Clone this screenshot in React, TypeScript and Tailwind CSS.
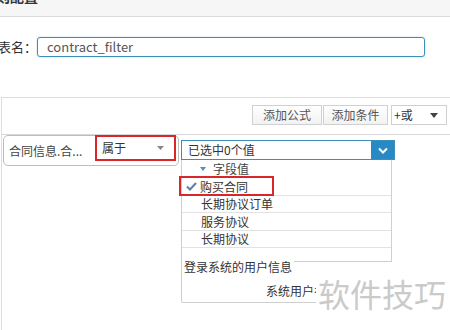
export default function App() {
  const font = { fontFamily: '"Noto Sans CJK SC", "Noto Sans", sans-serif' };
  return (
    <div className="w-[450px] h-[330px] overflow-hidden bg-white relative text-[#333]" style={font}>
      <div className="h-[17px] bg-[#f6f6f6] border-b border-[#dcdcdc] overflow-hidden">
        <div className="-mt-[14px] -ml-[18px] text-[14px] font-bold leading-[20px] whitespace-nowrap">规则配置</div>
      </div>

      <div className="flex items-center pt-[20px]">
        <div className="w-[39px] -ml-[2px] text-[13px] leading-[20px] shrink-0 whitespace-nowrap">表名：</div>
        <div className="w-[388px] h-[20px] border border-[#3c8fb9] rounded-[3px] flex items-center pl-[9px] text-[13px] text-[#555] shadow-[0_0_2px_rgba(60,143,185,0.4)]">
          contract_filter
        </div>
      </div>

      <div className="mt-[40px] ml-[1px] border-t border-l border-[#dedede] h-[240px]">
        <div className="flex justify-end items-center pt-[7px] pr-[3px] pb-[9px] border-b border-[#d8d8d8] text-[12px]">
          <div className="w-[70px] h-[20px] border border-[#d0d0d0] bg-gradient-to-b from-white to-[#f2f2f2] flex items-center justify-center text-[#555]">添加公式</div>
          <div className="w-[65px] h-[20px] ml-[1px] border border-[#d0d0d0] bg-gradient-to-b from-white to-[#f2f2f2] flex items-center justify-center text-[#555]">添加条件</div>
          <div className="w-[56px] h-[20px] ml-[3px] border border-[#d0d0d0] bg-white flex items-center pl-[2px] text-[#333]">
            <span>+或</span>
            <svg className="ml-auto mr-[8px]" width="8" height="5" viewBox="0 0 8 5"><path d="M0 0h8L4 5z" fill="#444" /></svg>
          </div>
        </div>

        <div className="flex items-start ml-[1px] text-[12px]">
          <div className="w-[176px] h-[31px] border border-[#bdbdbd] rounded-[5px] flex items-start shrink-0">
            <div className="w-[91px] pl-[5px] h-[29px] flex items-center text-[#444] whitespace-nowrap">合同信息.合...</div>
            <div className="w-[81px] h-[26px] -mt-[1px] border-2 border-[#d8262d] flex items-center pl-[5px] bg-white">
              <span>属于</span>
              <svg className="ml-auto mr-[10px]" width="7" height="4" viewBox="0 0 7 4"><path d="M0 0h7L3.5 4z" fill="#888" /></svg>
            </div>
          </div>

          <div className="ml-[2px] w-[214px] mt-[5px] shrink-0">
            <div className="h-[20px] border border-[#3c8fb9] flex items-stretch">
              <div className="flex-1 flex items-center pl-[6px] text-[#333]">已选中0个值</div>
              <div className="w-[23px] bg-[#2989c4] flex items-center justify-center">
                <svg width="10" height="7" viewBox="0 0 10 7"><path d="M1 1.5l4 4 4-4" stroke="white" strokeWidth="2" fill="none" /></svg>
              </div>
            </div>

            <div className="w-[211px] border-l border-b border-[#cfcfcf] rounded-bl-[2px]">
              <div className="border-r border-b border-[#cfcfcf] h-[102px]">
                <div className="h-[18px] flex items-center pl-[18px] text-[#444]">
                  <svg width="6" height="4" viewBox="0 0 6 4"><path d="M0 0h6L3 4z" fill="#4a90c8" /></svg>
                  <span className="ml-[7px]">字段值</span>
                </div>
                <div className="relative h-[18px] flex items-center pl-[4px] border-b border-[#e2e2e2]">
                  <span className="absolute -left-[3px] -top-[2px] w-[95px] h-[20px] border-2 border-[#d8262d]" />
                  <svg width="11" height="9" viewBox="0 0 11 9"><path d="M1 4.5l3 3 6-6.5" stroke="#5b7fa6" strokeWidth="2" fill="none" /></svg>
                  <span className="ml-[3px]">购买合同</span>
                </div>
                <div className="h-[17px] flex items-center pl-[19px] border-b border-[#e2e2e2]">长期协议订单</div>
                <div className="h-[18px] flex items-center pl-[19px] border-b border-[#e2e2e2]">服务协议</div>
                <div className="h-[17px] flex items-center pl-[19px] border-b border-[#e2e2e2]">长期协议</div>
              </div>
              <div className="relative -mt-[2px] bg-white w-fit pl-[2px] pr-[2px] leading-[14px] text-[#333] whitespace-nowrap">登录系统的用户信息</div>
              <div className="h-[28px] flex items-end pb-[2px] pl-[84px] text-[#333] whitespace-nowrap">系统用户名</div>
            </div>
          </div>
        </div>
      </div>

      <div className="absolute left-[316px] top-[274px] bg-white text-[32px] leading-[38px] text-[#cacaca] px-[2px] whitespace-nowrap">软件技巧</div>
    </div>
  );
}
